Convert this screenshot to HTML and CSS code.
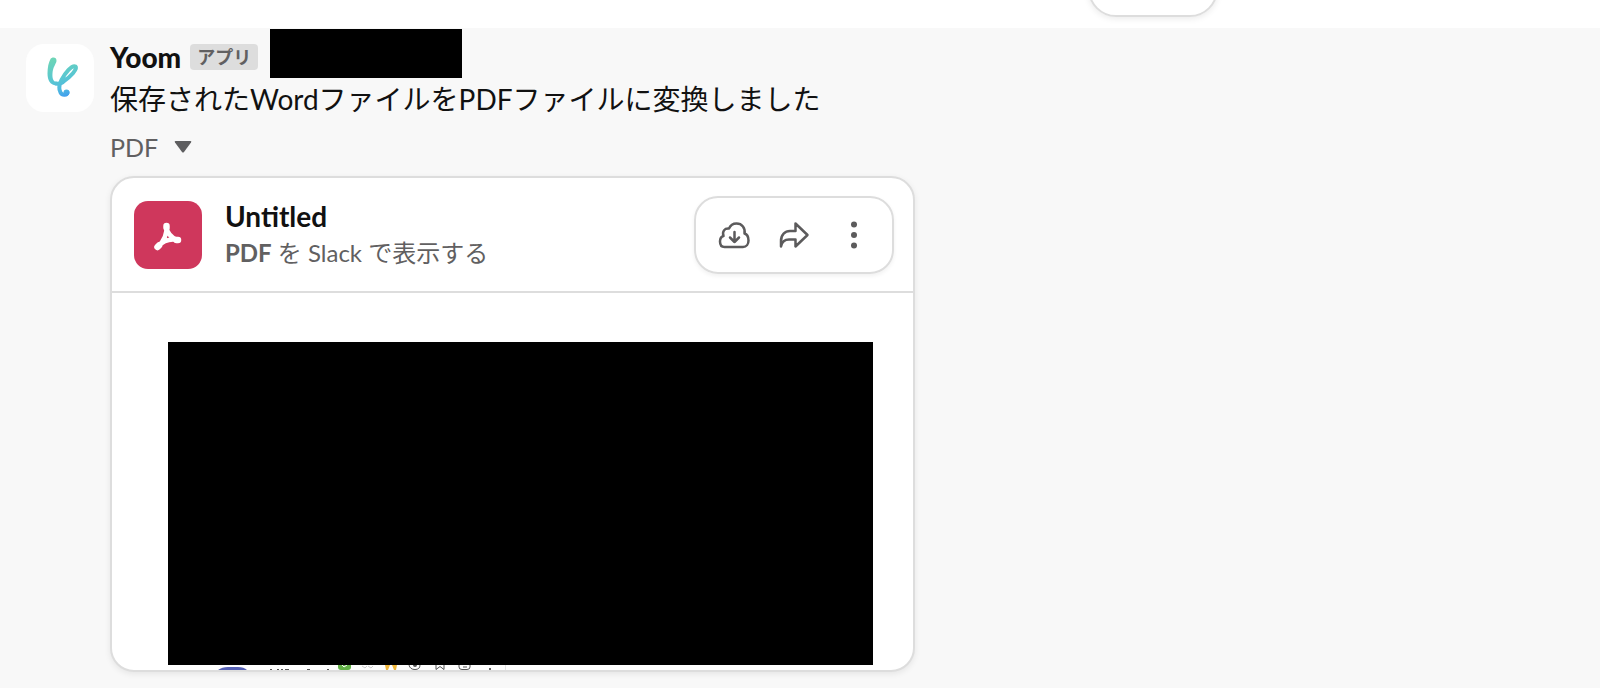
FILE: index.html
```html
<!DOCTYPE html>
<html lang="ja">
<head>
    <meta charset="UTF-8">
    <meta name="viewport" content="width=device-width, initial-scale=1.0">
    <title>Slack</title>
    <link rel="stylesheet" href="styles.css">
</head>
<body>
    <div class="previous">
        <div class="previous-pill"></div>
    </div>

    <main class="message">
        <svg class="avatar" viewBox="0 0 68 68" aria-hidden="true">
            <defs>
                <linearGradient id="yoom" gradientUnits="userSpaceOnUse" x1="26" y1="13" x2="38" y2="54">
                    <stop offset="0" stop-color="#6fd6b4"/>
                    <stop offset="0.55" stop-color="#58c6d2"/>
                    <stop offset="0.8" stop-color="#4fb8e0"/>
                    <stop offset="1" stop-color="#3f9bf0"/>
                </linearGradient>
            </defs>
            <path fill="url(#yoom)" d="M24.500 15C26 12.500 31 13 30.500 17C30 20 27 23 26.500 29C26 35 27.500 38 31 38L30 41.500C24 41 21.500 36 21.500 29.500C21.500 23.500 22.500 18.500 24.500 15Z"/>
            <path fill="none" stroke="url(#yoom)" stroke-width="4" stroke-linecap="round" stroke-linejoin="round" d="M30 39.500C33 40 36 39 38 37C44 33 52 25 49.500 22.500C46 20.500 39 29 35.500 36C33 41 33 46 34.500 48.500C36.500 52 41 51 41.500 48.500"/>
            <circle fill="url(#yoom)" cx="40.500" cy="48.500" r="3"/>
        </svg>

        <div class="body">
            <div class="sender">
                <span class="name">Yoom</span>
                <span class="badge">アプリ</span>
                <span class="redacted-time"></span>
            </div>
            <p class="text">保存されたWordファイルをPDFファイルに変換しました</p>
            <button class="file-toggle" type="button">
                PDF
                <svg width="18" height="12" viewBox="0 0 18 12" aria-hidden="true"><path fill="#5e5e60" d="M1.500 0H16.500Q18 0 17 1.500L10 11Q9 12 8 11L1 1.500Q0 0 1.500 0Z"/></svg>
            </button>

            <section class="card">
                <header class="card-header">
                    <svg class="pdf-icon" viewBox="0 0 68 68" aria-hidden="true">
                        <g fill="none" stroke="#fff" stroke-linecap="round" stroke-linejoin="round">
                            <path stroke-width="4.500" d="M32.500 25C32.500 31 37 37 43.500 39M32.500 25C33 32 30 40 24 45.500M24 45.500C29 40 36 37.500 43.500 39"/>
                            <path stroke-width="6.500" d="M32.500 25V26.500M42.500 39L44 39M23.500 46L25 44.500"/>
                        </g>
                    </svg>
                    <div class="file-info">
                        <div class="file-name">Untitled</div>
                        <div class="file-meta"><b>PDF</b> を Slack で表示する</div>
                    </div>
                    <div class="actions">
                        <button type="button" aria-label="ダウンロード">
                            <svg viewBox="0 0 36 36" aria-hidden="true"><path d="M8.500 30C5 30 4 27 4 24.500C4 21.500 5.500 19.500 7.500 19C6 14.500 8.500 11 13 11.500C14.500 8 17.500 6.500 20.500 6.500C26 6.500 29.500 11 28.500 16.500C31.500 17.500 32.500 20.500 32.500 23.500C32.500 27 30.500 30 27 30ZM18.500 15V25M14 20.500L18.500 25L23 20.500"/></svg>
                        </button>
                        <button type="button" aria-label="共有">
                            <svg viewBox="0 0 36 36" aria-hidden="true"><path d="M5 29.500V24C5 17.500 9 14 14 14H19.500V6.500L31.500 18L19.500 29.500V22.500H13C8.500 22.500 6 24.500 5 29.500Z"/></svg>
                        </button>
                        <button type="button" aria-label="その他">
                            <svg class="dots" viewBox="0 0 36 36" aria-hidden="true"><circle cx="18" cy="7.500" r="3"/><circle cx="18" cy="18" r="3"/><circle cx="18" cy="28.500" r="3"/></svg>
                        </button>
                    </div>
                </header>
                <div class="preview">
                    <div class="redacted-page"></div>
                    <svg class="page-edge" width="360" height="5" viewBox="0 0 360 5" aria-hidden="true">
                        <path fill="#5560b5" d="M50 5Q54 2 60 2H70Q76 2 79 5Z"/>
                        <path stroke="#555" stroke-width="1" d="M102 4.500H104M109 4.500H111M113 4.500H115M117 4.500H121M139 4.500H142M159 4.500H161"/>
                        <path fill="#62b146" d="M170 0H183V2Q183 5 180 5H173Q170 5 170 2Z"/>
                        <path fill="none" stroke="#fff" d="M174 0L176 2L179 0"/>
                        <path fill="none" stroke="#ccc" d="M194 1L197 3L199 1M200 1L203 3L205 1"/>
                        <path fill="#f0b73c" d="M217 0H222L220 5H218ZM224 0H229L228 5H226Z"/>
                        <path fill="none" stroke="#555" d="M241 0Q242 4.500 247 4.500T252 0M268 0V4.500L272 1.500L276 4.500V0M291 0V2Q291 4.500 294 4.500H299Q302 4.500 302 2V0M295 2H299"/>
                        <circle fill="#555" cx="247" cy="0" r="2"/>
                        <circle fill="#333" cx="322" cy="4" r="1"/>
                        <path stroke="#e4e4e4" d="M337.500 0V5"/>
                    </svg>
                </div>
            </section>
        </div>
    </main>
</body>
</html>
```

FILE: styles.css
```css
body {
    margin: 0;
    background: #fff;
    color: #111;
    font-family: Lato, "Noto Sans CJK JP", sans-serif;
}
button {
    margin: 0;
    padding: 0;
    border: none;
    background: none;
    font: inherit;
    cursor: pointer;
}
svg {
    display: block;
    flex: none;
}
.previous {
    display: flex;
    justify-content: flex-end;
    align-items: flex-end;
    height: 28px;
    padding-right: 382px;
    box-sizing: border-box;
    overflow: hidden;
}
.previous-pill {
    width: 130px;
    height: 76px;
    margin-bottom: 11px;
    box-sizing: border-box;
    border: 2px solid #ddd;
    border-radius: 28px;
    box-shadow: 0 2px 6px rgba(0, 0, 0, 0.08);
}
.message {
    display: flex;
    align-items: flex-start;
    gap: 16px;
    padding: 0 26px 16px;
    background: #f8f8f8;
}
.avatar {
    width: 68px;
    height: 68px;
    margin-top: 16px;
    border-radius: 18px;
    background: #fff;
}
.body {
    flex: 1;
    min-width: 0;
}
.sender {
    display: flex;
    align-items: center;
    height: 51px;
}
.name {
    padding-top: 6px;
    font-size: 28px;
    font-weight: 900;
    line-height: 36px;
}
.badge {
    margin: 6px 12px 0 9px;
    padding: 0 7px;
    border-radius: 4px;
    background: #ddd;
    color: #616061;
    font-size: 18px;
    font-weight: 700;
    line-height: 26px;
}
.redacted-time {
    width: 192px;
    height: 49px;
    background: #000;
}
.text {
    margin: 0;
    font-size: 28px;
    line-height: 40px;
}
.file-toggle {
    display: flex;
    align-items: center;
    gap: 16px;
    margin: 12px 0 13px;
    color: #616061;
    font-size: 25px;
    line-height: 32px;
}
.card {
    max-width: 805px;
    box-sizing: border-box;
    border: 2px solid #ddd;
    border-radius: 24px;
    background: #fff;
    box-shadow: 0 2px 6px rgba(0, 0, 0, 0.08);
    overflow: hidden;
}
.card-header {
    display: flex;
    align-items: center;
    gap: 23px;
    padding: 18px 19px 17px 22px;
    border-bottom: 2px solid #ddd;
}
.pdf-icon {
    width: 68px;
    height: 68px;
    border-radius: 14px;
    background: #cf375c;
}
.file-info {
    flex: 1;
}
.file-name {
    font-size: 28px;
    font-weight: 700;
    line-height: 36px;
}
.file-meta {
    color: #616061;
    font-size: 24px;
    line-height: 38px;
}
.actions {
    display: flex;
    align-items: center;
    gap: 24px;
    padding: 19px 20px;
    border: 2px solid #ddd;
    border-radius: 24px;
    box-shadow: 0 2px 4px rgba(0, 0, 0, 0.06);
}
.actions svg {
    width: 36px;
    height: 36px;
    fill: none;
    stroke: #5c5b5c;
    stroke-width: 2.5px;
    stroke-linejoin: round;
    stroke-linecap: round;
}
.actions .dots {
    fill: #5c5b5c;
    stroke: none;
}
.preview {
    padding: 49px 40px 0 56px;
}
.redacted-page {
    height: 323px;
    background: #000;
}
```
